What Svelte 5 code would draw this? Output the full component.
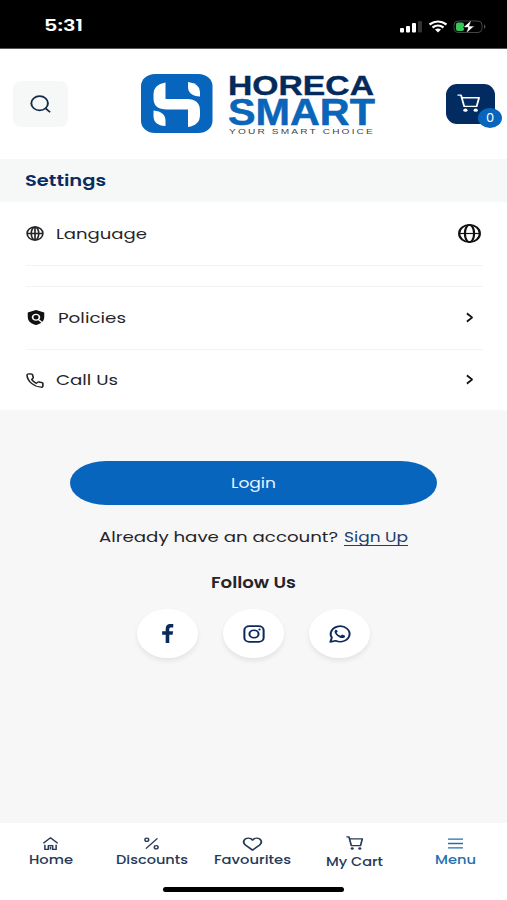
<script lang="ts">
	const rows = [
		{ name: 'Language', icon: 'globe', width: 91 },
		{ name: 'Policies', icon: 'policy', width: 68 },
		{ name: 'Call Us', icon: 'phone', width: 62 }
	];

	const socials = ['facebook', 'instagram', 'whatsapp'];

	const tabs = [
		{ name: 'Home', icon: 'home', width: 44 },
		{ name: 'Discounts', icon: 'percent', width: 72 },
		{ name: 'Favourites', icon: 'heart', width: 77 },
		{ name: 'My Cart', icon: 'cart', width: 57 },
		{ name: 'Menu', icon: 'menu', width: 41 }
	];

	let active = $state('Menu');
	let cart_count = $state(0);
</script>

<!-- wide lettering: the text is stretched to the given width -->
{#snippet label(text: string, width: number)}
	<svg class="label" {width} height="20">
		<text x="0" y="15" textLength={width} lengthAdjust="spacingAndGlyphs">{text}</text>
	</svg>
{/snippet}

{#snippet icon(name: string, width: number, height: number)}
	<svg class="icon" {width} {height} viewBox="0 0 24 24" preserveAspectRatio="none">
		{#if name === 'globe'}
			<circle cx="12" cy="12" r="10.5" />
			<ellipse cx="12" cy="12" rx="5" ry="10.5" />
			<path d="M1.5 12h21M12 1.5v21" />
		{:else if name === 'globe-big'}
			<circle cx="12" cy="12" r="10.8" />
			<ellipse cx="12" cy="12" rx="4.8" ry="10.8" />
			<path class="thin" d="M1.5 12h21" />
		{:else if name === 'policy'}
			<path class="solid" d="M12 0 23 4v7c0 6-4 11-11 13C5 22 1 17 1 11V4z" />
			<circle class="white" cx="12" cy="11.5" r="4.6" />
			<path class="white" d="m15 15 6 6" />
		{:else if name === 'phone'}
			<path d="M22.5 17.5v3.2a2 2 0 0 1-2.2 2C10.5 22 2 13.5 1.3 3.7a2 2 0 0 1 2-2.2h3.5a2 2 0 0 1 2 1.7l.8 3.6a2 2 0 0 1-.6 1.9L7.5 10.2a17 17 0 0 0 6.3 6.3l1.5-1.5a2 2 0 0 1 1.9-.6l3.6.8a2 2 0 0 1 1.7 2.3z" />
		{:else if name === 'search'}
			<circle cx="11" cy="11" r="9.5" />
			<path d="m17.5 17.5 5.5 5.5" />
		{:else if name === 'chevron'}
			<path d="m5 3 14 9-14 9" />
		{:else if name === 'cart'}
			<path d="M.5 1.5h3.7L7.5 16.500h13L23 5H5.200" />
			<circle class="solid" cx="8.8" cy="21.5" r="2.2" />
			<circle class="solid" cx="19.5" cy="21.5" r="2.2" />
		{:else if name === 'facebook'}
			<path class="solid" d="M8 24V13.5H2V9h6V6.5C8 2 11 0 15.500 0H21v4.500h-3.500c-2.500 0-3.300.8-3.300 2.500v2h6.600l-1 4.500h-5.600V24z" />
		{:else if name === 'instagram'}
			<rect x="1.5" y="1.5" width="21" height="21" rx="5.5" />
			<circle cx="12" cy="12" r="5" />
			<circle class="solid" cx="18" cy="6" r="1.3" />
		{:else if name === 'whatsapp'}
			<path d="m1.5 22.5 1.6-5.7A10.3 10.3 0 1 1 7.3 21z" />
			<path class="solid" d="M8.300 6.500c-.5-.5-1-.3-1.400.2-2.600 3 1.300 7.500 4.200 9.500 2.500 1.700 5.500 1.700 6.300-.7.200-.7.200-1.200-.3-1.500l-2.300-1.100c-.5-.2-.8 0-1.100.4l-.9 1.100c-2-.8-3.600-2.300-4.500-4.200l1-1.200c.2-.3.100-.7 0-1z" />
		{:else if name === 'home'}
			<path d="M.5 11.5 12 1.5l11.5 10M3 14.5V23h5.500v-7h7v7H21v-8.500M12 18v5" />
		{:else if name === 'percent'}
			<path d="M21.5 2.5 3 21.5" />
			<circle cx="4.500" cy="5" r="3" />
			<circle cx="19.500" cy="19" r="3" />
		{:else if name === 'heart'}
			<path d="M12 22.5 3 13.8C-1 9.5 1 2 6.7 2 9.2 2 11 3.3 12 5.3 13 3.3 14.8 2 17.3 2 23 2 25 9.5 21 13.8z" />
		{:else if name === 'menu'}
			<path d="M0 4h24M0 12h24M0 20h24" />
		{/if}
	</svg>
{/snippet}

<div class="app">
	<div class="status">
		<svg class="label clock" width="39" height="20">
			<text x="0" y="15" textLength="39" lengthAdjust="spacingAndGlyphs">5:31</text>
		</svg>
		<svg width="90" height="18" viewBox="0 0 90 18">
			<g fill="#fff">
				<rect x="1" y="11" width="4" height="4.5" rx="1" />
				<rect x="7" y="9" width="4" height="6.5" rx="1" />
				<rect x="13" y="6" width="4" height="9.5" rx="1" />
				<rect x="19" y="4" width="4" height="11.5" rx="1" fill="#333" />
			</g>
			<g fill="none" stroke="#fff" stroke-width="2.2">
				<path d="M30.5 7.5q8.5-6 17 0" />
				<path d="M33.5 10.5q5.5-4 11 0" />
			</g>
			<path d="M36 12.500q3-2 6 0L39 15.500z" fill="#fff" />
			<rect x="55" y="4" width="28" height="11.5" rx="4" fill="none" stroke="#454545" />
			<path d="M85 7.500q3 2 0 4.500z" fill="#555" />
			<rect x="57" y="5.5" width="8" height="8.5" rx="2" fill="#35c759" />
			<path d="M72.500 3 64 10.500h5L67 16.500l8.500-7.500h-5z" fill="#fff" stroke="#000" stroke-width=".6" />
		</svg>
	</div>

	<header>
		<button class="search" aria-label="Search">{@render icon('search', 21, 18)}</button>
		<div class="logo">
			<svg width="72" height="60" viewBox="0 0 72 60">
				<rect width="71.5" height="59" rx="14" ry="12" fill="#0865be" />
				<g fill="#fff">
					<path d="M24.5 8.5V25H46q13 0 13 12v4q0 10-12 12V35.500H26q-13.500 0-13.500-11v-4q0-10 12-12z" />
					<path d="M47 8q12 1.500 12 10v4.500q-12-.5-12-10z" />
					<path d="M12.500 36.500q12 1 12 10.500v5q-12-.5-12-10z" />
				</g>
			</svg>
			<svg class="wordmark" width="148" height="62" viewBox="0 0 148 62">
				<text class="horeca" x="-1" y="22" textLength="146" lengthAdjust="spacingAndGlyphs">HORECA</text>
				<text class="smart" x="-1" y="52" textLength="147" lengthAdjust="spacingAndGlyphs">SMART</text>
				<text class="tagline" x="0" y="60.500" textLength="146" lengthAdjust="spacingAndGlyphs">YOUR SMART CHOICE</text>
			</svg>
		</div>
		<button class="cart" aria-label="Cart">
			{@render icon('cart', 23, 18)}
			<span class="badge">{cart_count}</span>
		</button>
	</header>

	<h1>{@render label('Settings', 81)}</h1>

	<ul class="list">
		{#each rows as row (row.name)}
			<li class={row.icon}>
				<span class="row-icon">{@render icon(row.icon, 18, 15)}</span>
				{@render label(row.name, row.width)}
				<span class="end">
					{#if row.icon === 'globe'}
						{@render icon('globe-big', 23, 19)}
					{:else}
						{@render icon('chevron', 9, 11)}
					{/if}
				</span>
			</li>
		{/each}
	</ul>

	<main>
		<button class="login">{@render label('Login', 45)}</button>
		<p class="account">
			{@render label('Already have an account?', 239)}
			<a href="#signup">{@render label('Sign Up', 64)}</a>
		</p>
		<h2>{@render label('Follow Us', 85)}</h2>
		<div class="socials">
			{#each socials as name (name)}
				<a class={name} href="#{name}" aria-label={name}>
					{#if name === 'facebook'}
						{@render icon(name, 14, 19)}
					{:else}
						{@render icon(name, 22, 18)}
					{/if}
				</a>
			{/each}
		</div>
	</main>

	<nav>
		<div class="tabs">
			{#each tabs as tab (tab.name)}
				<button class={tab.icon} class:active={tab.name === active} onclick={() => (active = tab.name)}>
					{#if tab.icon === 'heart'}
						{@render icon(tab.icon, 19, 14)}
					{:else if tab.icon === 'cart'}
						{@render icon(tab.icon, 17, 14)}
					{:else}
						{@render icon(tab.icon, 15, 13)}
					{/if}
					{@render label(tab.name, tab.width)}
				</button>
			{/each}
		</div>
		<div class="home-bar"></div>
	</nav>
</div>

<style>
	:global(body) {
		margin: 0;
		background: #f7f7f7;
	}
	.app {
		display: flex;
		flex-direction: column;
		width: 507px;
		height: 900px;
		overflow: hidden;
		font-family: Poppins, Inter, sans-serif;
		font-size: 15px;
		color: #252528;
		background: #f7f7f7;
	}
	svg {
		display: block;
		flex: none;
	}
	.label {
		overflow: visible;
		fill: currentColor;
	}
	.icon {
		overflow: visible;
		fill: none;
		stroke: currentColor;
		stroke-width: 2.2;
		stroke-linejoin: round;
	}
	.icon .solid {
		fill: currentColor;
		stroke: none;
	}
	.icon .white {
		stroke: #fff;
	}
	.icon .thin {
		stroke-width: 1.5;
	}
	button {
		display: flex;
		align-items: center;
		justify-content: center;
		padding: 0;
		border: none;
		background: none;
		font: inherit;
		color: inherit;
	}
	.status {
		display: flex;
		align-items: center;
		justify-content: space-between;
		box-sizing: border-box;
		height: 49px;
		padding: 3px 18px 0 44px;
		border-bottom: 1px solid #555;
		color: #fff;
		background: #000;
	}
	.clock {
		font-size: 16px;
		font-weight: 600;
	}
	header {
		display: flex;
		align-items: center;
		height: 110px;
		padding: 0 12px 0 13px;
		background: #fff;
	}
	.search {
		width: 55px;
		height: 46px;
		border-radius: 8px;
		color: #152a45;
		background: #f6f7f7;
	}
	.search .icon {
		margin-right: 1px;
	}
	.logo {
		display: flex;
		align-items: center;
		gap: 16px;
		margin-left: 73px;
	}
	.wordmark {
		overflow: visible;
		font-family: 'Liberation Sans', sans-serif;
	}
	.horeca {
		font-size: 28.5px;
		font-weight: bold;
		fill: #042a5c;
		stroke: #042a5c;
		stroke-width: 0.4;
	}
	.smart {
		font-size: 36px;
		font-weight: bold;
		fill: #0b65b8;
		stroke: #0b65b8;
		stroke-width: 0.5;
	}
	.tagline {
		font-size: 7px;
		letter-spacing: 1.5px;
		fill: #444;
	}
	header .cart {
		position: relative;
		width: 49px;
		height: 40px;
		margin-left: auto;
		border-radius: 11px;
		color: #fff;
		background: #022b62;
	}
	header .cart .icon {
		margin: -2px 4px 0 0;
		stroke-width: 1.9;
	}
	.badge {
		position: absolute;
		right: -7px;
		bottom: -4px;
		width: 24px;
		height: 20px;
		border-radius: 50%;
		line-height: 20px;
		font-size: 13px;
		background: #0865be;
	}
	h1,
	h2,
	p,
	ul {
		margin: 0;
		padding: 0;
	}
	h1 {
		display: flex;
		align-items: center;
		height: 43px;
		padding-left: 25px;
		font-size: 16px;
		font-weight: 600;
		color: #0b2c60;
		background: #f6f7f7;
	}
	.list {
		height: 208px;
		padding: 0 24px 0 26px;
		list-style: none;
		background: #fff;
	}
	li {
		display: flex;
		align-items: center;
		box-sizing: border-box;
		height: 60px;
	}
	li.globe {
		height: 64px;
		border-bottom: 1px solid #f3f3f3;
	}
	li.policy {
		height: 64px;
		margin-top: 20px;
		border: 1px solid #f3f3f3;
		border-width: 1px 0;
	}
	.row-icon {
		width: 30px;
	}
	.policy .row-icon {
		width: 31px;
		margin-bottom: 1px;
		padding-left: 1px;
		color: #111;
	}
	.end {
		display: flex;
		justify-content: center;
		width: 24px;
		margin-left: auto;
		color: #111;
	}
	.globe .end {
		margin-right: 2px;
	}
	.end .icon {
		stroke-width: 2.3;
	}
	.policy .end .icon,
	.phone .end .icon {
		margin: 0 3px 2px 0;
		stroke-width: 4.5;
	}
	main {
		display: flex;
		flex: 1;
		flex-direction: column;
		align-items: center;
		padding-top: 51px;
	}
	.login {
		width: 367px;
		height: 44px;
		border-radius: 36px / 22px;
		color: #e8f3ff;
		background: #0865be;
	}
	.account {
		display: flex;
		gap: 6px;
		margin-top: 22px;
	}
	.account a {
		height: 18px;
		border-bottom: 1px solid #1d3d6e;
		color: #1d3d6e;
		text-decoration: none;
	}
	h2 {
		margin-top: 26px;
		font-size: 15px;
		font-weight: 600;
	}
	.socials {
		display: flex;
		gap: 25px;
		margin-top: 16px;
	}
	.socials a {
		display: flex;
		align-items: center;
		justify-content: center;
		width: 61px;
		height: 49px;
		border-radius: 50%;
		color: #0b2a5b;
		background: #fff;
		box-shadow: 0 3px 5px rgba(0, 0, 0, 0.08);
	}
	nav {
		height: 77px;
		background: #fff;
	}
	.tabs {
		display: grid;
		grid-template-columns: repeat(5, 101.2px);
		height: 64px;
		font-size: 13px;
		font-weight: 500;
		color: #263a57;
	}
	.tabs button {
		flex-direction: column;
		justify-content: flex-start;
		padding-top: 14px;
		color: inherit;
	}
	.tabs .cart {
		padding-top: 13px;
	}
	.tabs .icon {
		stroke-width: 2.4;
	}
	.tabs .label {
		margin-top: -1px;
	}
	.tabs .heart .label {
		margin-top: -2px;
	}
	.tabs .cart .label {
		margin-top: 1px;
	}
	.tabs button.active {
		color: #2370ad;
	}
	.home-bar {
		width: 181px;
		height: 5px;
		margin: 0 auto;
		border-radius: 3px;
		background: #000;
	}
</style>
